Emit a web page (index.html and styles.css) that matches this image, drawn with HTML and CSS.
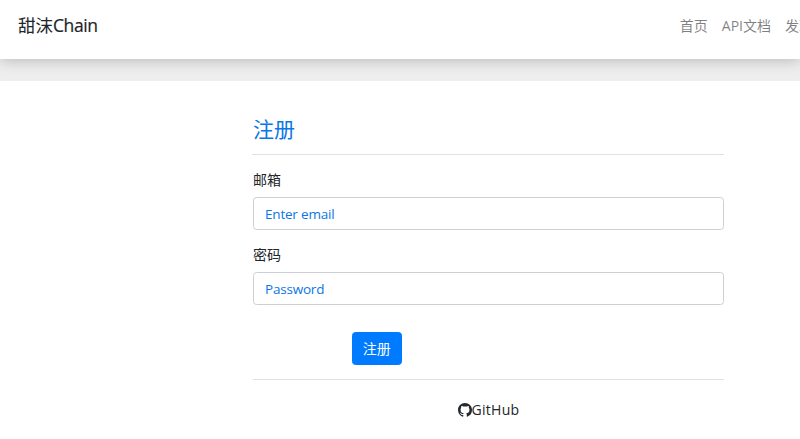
FILE: index.html
```html
<!DOCTYPE html>
<html lang="zh">
<head>
<meta charset="utf-8">
<title>注册</title>
<link rel="stylesheet" href="styles.css">
</head>
<body>
<nav class="navbar">
  <a class="brand" href="#">甜沫<span class="brand-latin">Chain</span></a>
  <ul class="nav">
    <li><a href="#">首页</a></li>
    <li><a href="#">API文档</a></li>
    <li><a href="#">发现</a></li>
  </ul>
</nav>
<div class="band"></div>
<main class="content">
  <h2 class="title">注册</h2>
  <form class="form">
    <div class="group">
      <label class="label" for="email">邮箱</label>
      <input class="input" id="email" type="email" placeholder="Enter email">
    </div>
    <div class="group">
      <label class="label" for="password">密码</label>
      <input class="input" id="password" type="password" placeholder="Password">
    </div>
    <div class="actions">
      <button class="btn" type="button">注册</button>
    </div>
  </form>
  <footer class="foot">
    <a class="gh" href="#">
      <svg class="gh-icon" viewBox="0 0 16 16" aria-hidden="true"><path d="M8 0C3.58 0 0 3.58 0 8c0 3.54 2.29 6.53 5.47 7.59.4.07.55-.17.55-.38 0-.19-.01-.82-.01-1.49-2.01.37-2.53-.49-2.69-.94-.09-.23-.48-.94-.82-1.13-.28-.15-.68-.52-.01-.53.63-.01 1.08.58 1.23.82.72 1.21 1.87.87 2.33.66.07-.52.28-.87.51-1.07-1.78-.2-3.64-.89-3.64-3.95 0-.87.31-1.59.82-2.15-.08-.2-.36-1.02.08-2.12 0 0 .67-.21 2.2.82.64-.18 1.32-.27 2-.27s1.36.09 2 .27c1.53-1.04 2.2-.82 2.2-.82.44 1.1.16 1.92.08 2.12.51.56.82 1.27.82 2.15 0 3.07-1.87 3.75-3.65 3.95.29.25.54.73.54 1.48 0 1.07-.01 1.93-.01 2.2 0 .21.15.46.55.38A8.01 8.01 0 0 0 16 8c0-4.42-3.58-8-8-8z"/></svg><span class="gh-text">GitHub</span>
    </a>
  </footer>
</main>
</body>
</html>
```
FILE: styles.css
```css
* { box-sizing: border-box; }
html, body { margin: 0; padding: 0; }
body {
  width: 800px;
  height: 439px;
  overflow: hidden;
  background: #fff;
  color: #212529;
  font: 14px/21px "Open Sans", "Noto Sans CJK SC", sans-serif;
}
a { text-decoration: none; color: inherit; }
.navbar {
  position: relative;
  height: 59px;
  padding: 0 18px 9px;
  display: flex;
  align-items: center;
  justify-content: space-between;
  flex-wrap: nowrap;
  background: #fff;
  box-shadow: 0 1px 14px rgba(0, 0, 0, .24);
}
.brand { font-size: 17.5px; line-height: 26px; white-space: nowrap; }
.brand-latin { letter-spacing: -.4px; -webkit-text-stroke: .2px #212529; }
.nav {
  display: flex;
  gap: 14px;
  margin: 0 -31px 0 0;
  padding: 0;
  list-style: none;
  white-space: nowrap;
  color: rgba(0, 0, 0, .5);
}
.band { height: 22px; background: #eee; }
.content { width: 471px; margin-left: 253px; padding-top: 32px; }
.title {
  margin: 0 0 0 -1px;
  padding: 0 0 9px 1px;
  border-bottom: 1px solid #dee2e6;
  color: #0a76e8;
  font-size: 21px;
  line-height: 32px;
  font-weight: 400;
}
.form { padding-top: 14px; }
.group { margin-bottom: 14px; }
.label { display: block; margin-bottom: 7px; }
.input {
  display: block;
  width: 100%;
  height: 33px;
  padding: 1px 11px 0;
  border: 1px solid #ccd0d4;
  border-radius: 3.5px;
  font: inherit;
  font-size: 13.5px;
  letter-spacing: -.2px;
  color: #495057;
  background: #fff;
  outline: none;
}
.input::placeholder { color: #0a76e8; opacity: 1; }
.actions { padding-left: 98.5px; padding-top: 13px; }
.btn {
  display: block;
  width: 50.5px;
  height: 33px;
  padding: 0;
  border: 1px solid #007bff;
  border-radius: 3.5px;
  background: #007bff;
  color: #fff;
  font: inherit;
}
.foot {
  margin-top: 14px;
  padding-top: 19px;
  border-top: 1px solid #dee2e6;
  text-align: center;
}
.gh { display: inline-flex; align-items: center; }
.gh-icon { width: 14px; height: 14px; fill: #24292e; }
.gh-text { letter-spacing: .3px; }
```
